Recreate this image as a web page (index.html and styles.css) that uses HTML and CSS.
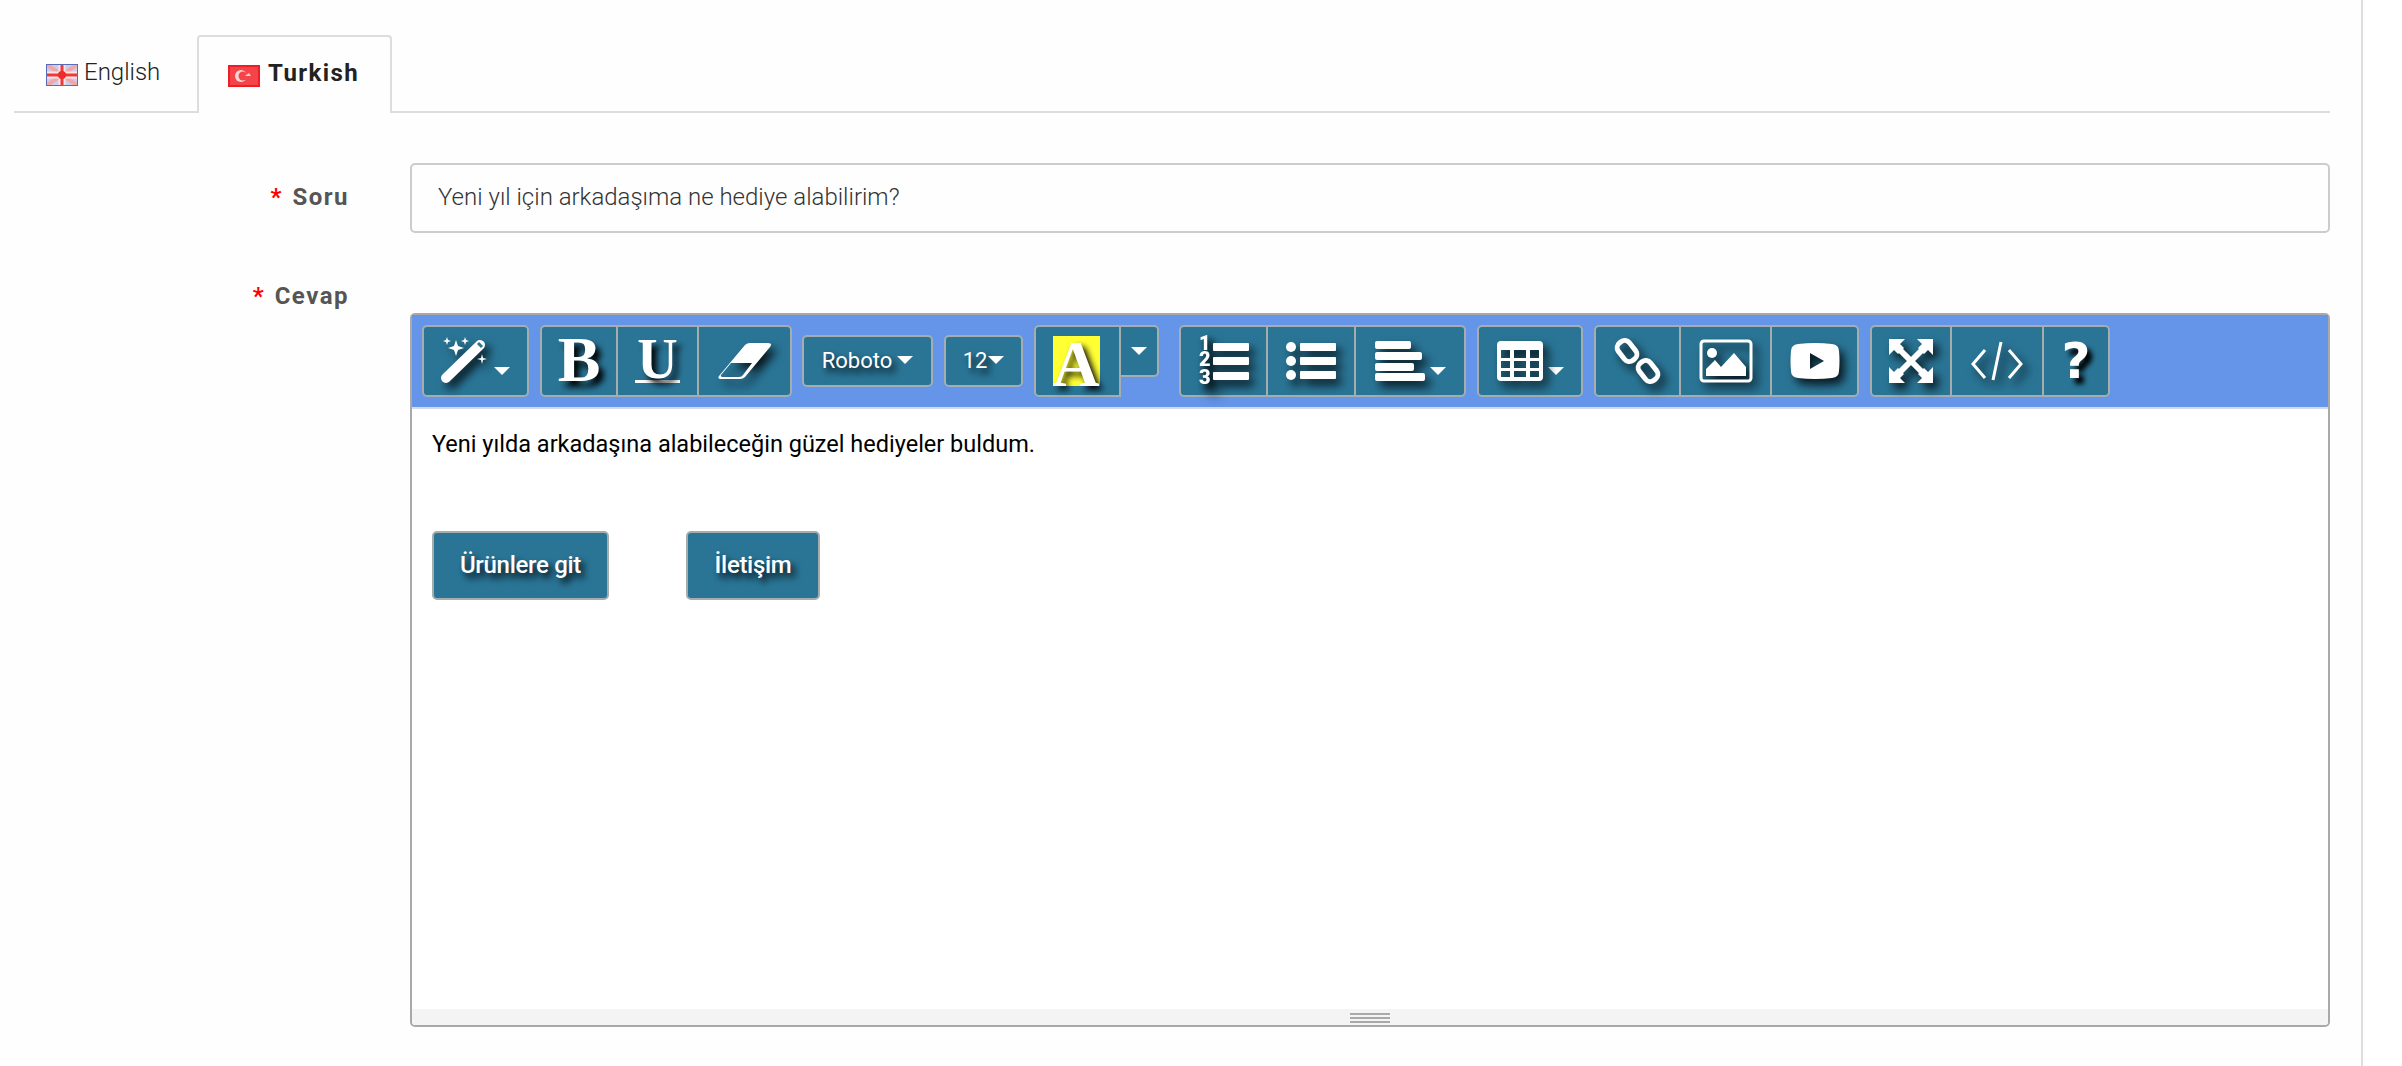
FILE: index.html
```html
<!DOCTYPE html>
<html lang="tr">
<head>
    <meta charset="UTF-8">
    <title>Soru Cevap</title>
    <link rel="stylesheet" href="styles.css">
</head>
<body>
    <div class="page">
        <!-- dil sekmeleri -->
        <div class="tabs">
            <a class="tab">
                <svg class="flag" viewBox="0 0 32 22">
                    <rect width="32" height="22" fill="#c9cdf0"/>
                    <path d="M0 0L32 22M32 0L0 22" stroke="#f3a6a6" stroke-width="4"/>
                    <path d="M16 0V22M0 11H32" stroke="#fbe4e4" stroke-width="7"/>
                    <path d="M16 0V22M0 11H32" stroke="#ee3a3a" stroke-width="3"/>
                    <circle cx="16" cy="11" r="4" fill="#ee2a2a"/>
                    <path d="M0 0H32M0 22H32M0 0V22M32 0V22" stroke="#5a6cb8" stroke-width="2"/>
                </svg>
                English
            </a>
            <a class="tab active">
                <svg class="flag" viewBox="0 0 32 22">
                    <rect width="32" height="22" fill="#ee1c25"/>
                    <rect x="2" y="2" width="28" height="18" fill="#f4444a"/>
                    <circle cx="13" cy="11" r="6" fill="#f9d4d4"/>
                    <circle cx="15" cy="11" r="4.5" fill="#f4444a"/>
                    <path d="M17 11l4-3 2 3z" fill="#f9d4d4"/>
                </svg>
                Turkish
            </a>
        </div>

        <!-- soru -->
        <div class="form-row question-row">
            <label class="form-label"><span class="req">*</span> Soru</label>
            <input class="form-input" type="text" value="Yeni yıl için arkadaşıma ne hediye alabilirim?">
        </div>

        <!-- cevap -->
        <div class="form-row answer-row">
            <label class="form-label"><span class="req">*</span> Cevap</label>
            <div class="editor">
                <div class="toolbar">
                    <div class="btn-group">
                        <button class="btn w-magic">
                            <svg class="ico" width="48" height="48" viewBox="0 0 48 48">
                                <path d="M5 41L39 8" stroke="#fff" stroke-width="10" stroke-linecap="round"/>
                                <path d="M37 6l4 4" stroke="#2a7596" stroke-width="3"/>
                                <path d="M15 3l2 6 6 2-6 2-2 6-2-6-6-2 6-2z" fill="#fff"/>
                                <path d="M6 0l1 3 3 1-3 1-1 3-1-3-3-1 3-1z" fill="#fff"/>
                                <path d="M24 0l1 3 3 1-3 1-1 3-1-3-3-1 3-1z" fill="#fff"/>
                                <path d="M41 17l1 4 4 1-4 1-1 4-1-4-4-1 4-1z" fill="#fff"/>
                            </svg>
                            <span class="caret"></span>
                        </button>
                    </div>
                    <div class="btn-group">
                        <button class="btn w-78 letter">B</button>
                        <button class="btn w-81 letter-u"><span class="u-mark">U</span></button>
                        <button class="btn w-93">
                            <svg class="ico" width="56" height="38" viewBox="0 0 56 38">
                                <path d="M2 34L28 3Q30 1 33 1H51Q56 1 53 5L28 35Q26 37 23 37H5Q0 37 2 34ZM14 21L4 33Q3 35 6 35H22Q25 35 26 33L35 21Z" fill="#fff" fill-rule="evenodd"/>
                            </svg>
                        </button>
                    </div>
                    <button class="btn solo w-font">Roboto<span class="caret"></span></button>
                    <button class="btn solo w-size">12<span class="caret"></span></button>
                    <div class="btn-group color-group">
                        <button class="btn w-color"><span class="color-a">A</span></button>
                        <button class="btn w-drop"><span class="caret no-gap"></span></button>
                    </div>
                    <div class="btn-group list-group">
                        <button class="btn w-89">
                            <svg class="ico" width="50" height="50" viewBox="0 0 50 50">
                                <text class="ol-num"><tspan x="0" y="14">1</tspan><tspan x="0" y="30">2</tspan><tspan x="0" y="48">3</tspan></text>
                                <rect x="14" y="7" width="36" height="8" rx="1" fill="#fff"/>
                                <rect x="14" y="21" width="36" height="8" rx="1" fill="#fff"/>
                                <rect x="14" y="36" width="36" height="8" rx="1" fill="#fff"/>
                            </svg>
                        </button>
                        <button class="btn w-88">
                            <svg class="ico" width="50" height="38" viewBox="0 0 50 38">
                                <circle cx="5" cy="5" r="5" fill="#fff"/>
                                <circle cx="5" cy="19" r="5" fill="#fff"/>
                                <circle cx="5" cy="33" r="5" fill="#fff"/>
                                <rect x="14" y="1" width="36" height="8" rx="1" fill="#fff"/>
                                <rect x="14" y="15" width="36" height="8" rx="1" fill="#fff"/>
                                <rect x="14" y="29" width="36" height="8" rx="1" fill="#fff"/>
                            </svg>
                        </button>
                        <button class="btn w-110">
                            <svg class="ico" width="50" height="40" viewBox="0 0 50 40">
                                <rect x="0" y="0" width="36" height="8" rx="2" fill="#fff"/>
                                <rect x="0" y="11" width="47" height="8" rx="2" fill="#fff"/>
                                <rect x="0" y="22" width="39" height="8" rx="2" fill="#fff"/>
                                <rect x="0" y="32" width="50" height="8" rx="2" fill="#fff"/>
                            </svg>
                            <span class="caret"></span>
                        </button>
                    </div>
                    <div class="btn-group">
                        <button class="btn w-table">
                            <svg class="ico" width="46" height="40" viewBox="0 0 46 40">
                                <path fill-rule="evenodd" fill="#fff" d="M4 0H42Q46 0 46 4V36Q46 40 42 40H4Q0 40 0 36V4Q0 0 4 0ZM4 9V17H13V9ZM17 9V17H29V9ZM33 9V17H42V9ZM4 20V27H13V20ZM17 20V27H29V20ZM33 20V27H42V20ZM4 30V36H13V30ZM17 30V36H29V30ZM33 30V36H42V30Z"/>
                            </svg>
                            <span class="caret"></span>
                        </button>
                    </div>
                    <div class="btn-group">
                        <button class="btn w-87">
                            <svg class="ico" width="46" height="46" viewBox="0 0 46 46">
                                <g fill="none" stroke="#fff" stroke-width="5">
                                    <rect x="-7" y="-11" width="14" height="22" rx="6" transform="translate(12 13) rotate(-38)"/>
                                    <rect x="-7" y="-11" width="14" height="22" rx="6" transform="translate(33 33) rotate(-38)"/>
                                </g>
                            </svg>
                        </button>
                        <button class="btn w-91">
                            <svg class="ico" width="54" height="44" viewBox="0 0 54 44">
                                <rect x="2" y="2" width="50" height="40" rx="3" fill="none" stroke="#fff" stroke-width="3"/>
                                <circle cx="13" cy="14" r="5" fill="#fff"/>
                                <path d="M7 37V30L16 21L22 28L35 14L47 28V37Z" fill="#fff"/>
                            </svg>
                        </button>
                        <button class="btn w-87">
                            <svg class="ico" width="50" height="36" viewBox="0 0 50 36">
                                <path d="M8 1Q25 -1 42 1Q49 2 49 8Q50 18 49 28Q49 34 42 35Q25 37 8 35Q1 34 1 28Q0 18 1 8Q1 2 8 1ZM20 10V26L34 18Z" fill="#fff" fill-rule="evenodd"/>
                            </svg>
                        </button>
                    </div>
                    <div class="btn-group">
                        <button class="btn w-82">
                            <svg class="ico" width="44" height="44" viewBox="0 0 44 44">
                                <path d="M8 8L36 36M36 8L8 36" stroke="#fff" stroke-width="6"/>
                                <path d="M0 0H16L11 5L15 9L9 15L5 11L0 16ZM44 0V16L39 11L35 15L29 9L33 5L28 0ZM0 44V28L5 33L9 29L15 35L11 39L16 44ZM44 44H28L33 39L29 35L35 29L39 33L44 28Z" fill="#fff"/>
                            </svg>
                        </button>
                        <button class="btn w-92">
                            <svg class="ico" width="52" height="40" viewBox="0 0 52 40">
                                <path d="M14 9L2 23L14 37M38 9L50 23L38 37M30 1L22 39" fill="none" stroke="#fff" stroke-width="3"/>
                            </svg>
                        </button>
                        <button class="btn w-66 letter-q">?</button>
                    </div>
                </div>

                <div class="editor-body">
                    <p class="editor-text">Yeni yılda arkadaşına alabileceğin güzel hediyeler buldum.</p>
                    <div class="link-row">
                        <a class="btn link-btn w-link1">Ürünlere git</a>
                        <a class="btn link-btn w-link2">İletişim</a>
                    </div>
                </div>

                <div class="statusbar">
                    <div class="grip"><i></i><i></i><i></i></div>
                </div>
            </div>
        </div>
    </div>
</body>
</html>
```

FILE: styles.css
```css
* {
    margin: 0;
    padding: 0;
    box-sizing: border-box;
}

body {
    background: #fff;
    font-family: Roboto, "Liberation Sans", sans-serif;
    color: #333;
}

.page {
    width: 2363px;
    height: 1066px;
    padding: 35px 31px 0 14px;
    background: #fefefe;
    border-right: 2px solid #ddd;
    overflow: hidden;
}

/* sekmeler */
.tabs {
    display: flex;
    height: 78px;
    border-bottom: 2px solid #ddd;
}

.tab {
    display: flex;
    align-items: center;
    height: 78px;
    padding: 0 37px 5px 32px;
    width: 183px;
    font-size: 24px;
    font-weight: 300;
    color: #222;
    white-space: nowrap;
}

.tab .flag {
    width: 32px;
    height: 22px;
    margin: 6px 6px 0 0;
    flex-shrink: 0;
}

.tab.active {
    width: 195px;
    padding-left: 29px;
    background: #fefefe;
    border: 2px solid #ddd;
    border-bottom: none;
    border-radius: 4px 4px 0 0;
    font-weight: 700;
    letter-spacing: 1.4px;
}

.tab.active .flag {
    margin-right: 8px;
}

/* form */
.form-row {
    display: grid;
    grid-template-columns: 335px 1920px;
    column-gap: 61px;
}

.question-row {
    margin-top: 50px;
    align-items: center;
}

.question-row .form-label {
    padding-bottom: 3px;
}

.answer-row {
    margin-top: 45px;
}

.form-label {
    text-align: right;
    font-size: 24px;
    line-height: 36px;
    font-weight: 700;
    letter-spacing: 1.5px;
    color: #555;
}

.req {
    color: #f00;
    margin-right: 2px;
}

.form-input {
    width: 100%;
    height: 70px;
    padding: 0 26px 3px;
    font-family: Roboto, sans-serif;
    font-size: 24px;
    font-weight: 300;
    color: #333;
    background: #fefefe;
    border: 2px solid #ccc;
    border-radius: 5px;
}

/* editor */
.editor {
    margin-top: 35px;
    height: 714px;
    display: flex;
    flex-direction: column;
    border: 2px solid #a9a9a9;
    border-radius: 5px;
    background: #fff;
}

.toolbar {
    display: flex;
    align-items: flex-start;
    gap: 11px;
    height: 94px;
    padding: 10px 0 0 10px;
    background: #6495e8;
    border-bottom: 2px solid #d5dbe6;
    flex-shrink: 0;
}

.btn-group {
    display: flex;
}

.btn {
    display: flex;
    align-items: center;
    justify-content: center;
    height: 72px;
    background: #2a7596;
    border: 2px solid #a5adaf;
    border-radius: 0;
    color: #fff;
    font-family: Roboto, sans-serif;
    font-size: 22px;
    text-shadow: 4px 5px 7px #000;
}

.btn-group .btn + .btn {
    border-left: none;
}

.btn-group .btn:first-child {
    border-radius: 5px 0 0 5px;
}

.btn-group .btn:last-child {
    border-radius: 0 5px 5px 0;
}

.btn-group .btn:only-child {
    border-radius: 5px;
}

.ico {
    display: block;
    overflow: visible;
    filter: drop-shadow(5px 6px 5px rgba(0, 0, 0, 0.8));
}

.caret {
    display: inline-block;
    width: 0;
    height: 0;
    margin-left: 5px;
    border-left: 8px solid transparent;
    border-right: 8px solid transparent;
    border-top: 8px solid #fff;
    align-self: flex-end;
    margin-bottom: 20px;
}

.solo .caret {
    align-self: center;
    margin-bottom: 0;
}

.w-size .caret {
    margin-left: 1px;
}

.caret.no-gap {
    margin: 0;
    align-self: center;
}

.solo {
    height: 52px;
    margin-top: 10px;
    padding-bottom: 2px;
    border-radius: 5px;
}

.w-font {
    margin-left: -1px;
}

.w-magic { width: 107px; }
.w-78 { width: 78px; }
.w-81 { width: 81px; }
.w-93 { width: 93px; }
.w-font { width: 131px; }
.w-size { width: 79px; }
.w-color { width: 87px; }
.w-drop { width: 38px; height: 52px; }
.w-89 { width: 89px; }
.w-88 { width: 88px; }
.w-110 { width: 110px; }
.w-table { width: 106px; }
.w-87 { width: 87px; }
.w-91 { width: 91px; }
.w-82 { width: 82px; }
.w-92 { width: 92px; }
.w-66 { width: 66px; }

.letter {
    padding-bottom: 3px;
    font-family: "Liberation Serif", serif;
    font-weight: 700;
    font-size: 64px;
    line-height: 1;
    text-shadow: 5px 6px 6px #000;
}

.letter-u {
    font-family: "Liberation Serif", serif;
    font-weight: 700;
    font-size: 56px;
    text-shadow: 5px 6px 6px #000;
}

.u-mark {
    display: block;
    line-height: 38px;
    height: 43px;
    border-bottom: 3px solid #fff;
    padding: 0 2px;
}

.letter-q {
    font-family: "DejaVu Sans", sans-serif;
    font-weight: 700;
    font-size: 50px;
    text-shadow: 5px 6px 5px #000;
}

.color-group {
    align-items: flex-start;
}

.color-a {
    display: block;
    width: 47px;
    height: 50px;
    margin-left: -3px;
    background: #ffff33;
    font-family: "Liberation Serif", serif;
    font-weight: 700;
    font-size: 65px;
    line-height: 56px;
    text-align: center;
    text-shadow: 4px 4px 6px #000;
}

.list-group {
    margin-left: 9px;
}

.ol-num {
    fill: #fff;
    font-family: Roboto, sans-serif;
    font-weight: 900;
    font-size: 20px;
}

/* editor icerigi */
.editor-body {
    flex: 1;
    padding: 18px 20px;
    background: #fff;
}

.editor-text {
    font-size: 23.5px;
    line-height: 34px;
    color: #000;
}

.link-row {
    display: flex;
    gap: 77px;
    margin-top: 70px;
}

.link-btn {
    height: 69px;
    border-radius: 5px;
    font-size: 24px;
    font-weight: 500;
    letter-spacing: -0.3px;
    padding-bottom: 2px;
}

.w-link1 { width: 177px; }
.w-link2 { width: 134px; }

.statusbar {
    height: 16px;
    display: flex;
    justify-content: center;
    background: #f4f4f4;
    border-radius: 0 0 4px 4px;
    flex-shrink: 0;
}

.grip {
    width: 40px;
    margin-top: 4px;
}

.grip i {
    display: block;
    height: 2px;
    margin-bottom: 2px;
    background: #a9a9a9;
}
```
